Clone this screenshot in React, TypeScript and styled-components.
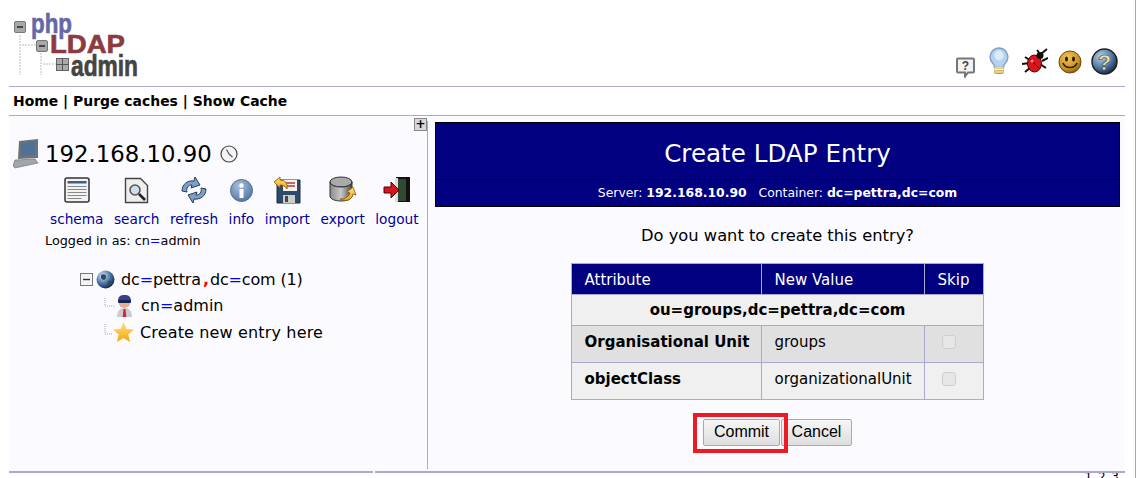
import React from "react";
import styled, { createGlobalStyle } from "styled-components";

const Global = createGlobalStyle`
  html, body { margin: 0; padding: 0; background: #fff; overflow: hidden; }
  body { font-family: "DejaVu Sans", Verdana, sans-serif; color: #000; }
`;
const Page = styled.div`
  width: 1136px; height: 478px; border-right: 1px solid #a9a9a9; padding: 0 10px 0 9px; box-sizing: border-box; overflow: hidden;
`;
const Head = styled.header`
  height: 86px; display: flex; justify-content: space-between; align-items: flex-start;
  border-bottom: 1px solid #aaaacc;
`;
const Logo = styled.svg` width: 132px; height: 64px; margin: 14px 0 0 4px; flex: none; overflow: visible; `;
const HeadIcons = styled.div` display: flex; align-items: flex-start; margin: 47px 7px 0 0; `;
const HeadIcon = styled.span<{ $right?: number; $top?: number }>`
  display: block; margin: ${p => p.$top ?? 0}px ${p => p.$right ?? 0}px 0 0;
`;
const Menu = styled.nav`
  height: 28px; border-bottom: 1px solid #aaaacc; display: flex; align-items: center; padding-left: 4px;
  font-size: 13.95px; font-weight: 700; white-space: pre;
`;
const Main = styled.main`
  background: #fbfbff; border-bottom: 2px solid #aaaacc; padding: 5px 0 2px;
  display: grid; grid-template-columns: 419px 1fr; height: 348px; position: relative;
  &::after { content: ""; position: absolute; left: 364px; bottom: -2px; width: 2px; height: 2px; background: #fff; }
`;
const Side = styled.aside` border-right: 1px solid #aaaacc; position: relative; padding: 16px 0 0 4px; min-width: 0; `;
const Expand = styled.div`
  position: absolute; right: 0; top: -3px; width: 11px; height: 11px; border: 1px solid #888; background: #d8d8d8;
  font: 700 12px/10px "DejaVu Sans", sans-serif; text-align: center; color: #000;
`;
const Server = styled.div` display: flex; align-items: center; font-size: 22.8px; height: 34px; gap: 5px; `;
const ClockSlot = styled.span` margin-left: 3px; display: block; `;
const Actions = styled.div` display: flex; gap: 10.5px; padding: 5px 0 0 37px; `;
const Action = styled.a`
  display: flex; flex-direction: column; align-items: center; gap: 7px; font-size: 13.7px; color: #000099; line-height: 17px;
`;
const IconSlot = styled.span` height: 28px; display: flex; align-items: center; `;
const Logged = styled.div` font-size: 12.8px; padding: 5px 0 0 32px; line-height: 16px; `;
const Tree = styled.div` margin: 17px 0 0 67px; font-size: 16px; `;
const TreeRow = styled.div<{ $indent?: number }>`
  display: flex; align-items: center; height: 26.5px; padding-left: ${p => p.$indent ?? 0}px; white-space: pre;
`;
const TreeLabel = styled.span<{ $left: number; $track?: number }>`
  margin-left: ${p => p.$left}px; letter-spacing: ${p => p.$track ?? 0}px;
`;
const GlobeSlot = styled.span` margin-left: 3px; display: block; `;
const Eq = styled.span` color: #0000ff; `;
const Comma = styled.span` color: #ff0000; margin: 0 1px 0 2px; font-weight: 700; `;
const Content = styled.section` padding: 1px 5px 0 7px; min-width: 0; `;
const Title = styled.div` background: #000080; border: 1px solid #000; color: #fff; text-align: center; `;
const TitleMain = styled.h3`
  margin: 0; height: 56px; line-height: 61px; font-size: 24.6px; font-weight: 400; border-bottom: 1px solid #000;
`;
const TitleSub = styled.div` height: 26px; line-height: 26px; font-size: 12.4px; white-space: pre; `;
const Question = styled.div` text-align: center; font-size: 16.3px; margin-top: 19px; line-height: 20px; `;
const Table = styled.table`
  border-collapse: collapse; margin: 17px auto 0; width: 413px; table-layout: fixed; font-size: 15px;
  td, th { border: 1px solid #aaaacc; padding: 0 0 0 12.500px; font-weight: 400; text-align: left; }
`;
const ColA = styled.col` width: 190px; `;
const ColB = styled.col` width: 163px; `;
const HeadRow = styled.tr` background: #000080; color: #fff; height: 31px; th { padding-top: 2px; } `;
const DnRow = styled.tr`
  background: #f0f0f0; height: 31px; td { text-align: center; font-weight: 700; padding: 0; }
`;
const Row = styled.tr<{ $shade?: boolean; $h: number }>`
  background: ${p => (p.$shade ? "#e0e0e0" : "#f0f0f0")}; height: ${p => p.$h}px;
  td { padding-bottom: 4px; }
`;
const AttrCell = styled.td` && { font-weight: 700; } `;
const SkipCell = styled.td` && { padding-left: 17px; } `;
const Box = styled.span`
  display: block; width: 14px; height: 14px; box-sizing: border-box;
  border: 1px solid #cfcfcf; border-radius: 3px; background: #e6e6e6;
`;
const Buttons = styled.div` display: flex; justify-content: center; margin-top: 19px; gap: 1px; `;
const Btn = styled.button<{ $w: number }>`
  font: 16px "Liberation Sans", Arial, sans-serif; height: 27px; padding: 0 0 2px; color: #000; box-sizing: border-box;
  background: linear-gradient(#f6f6f6, #dedede); border: 1px solid #a9a9a9; border-radius: 2px; width: ${p => p.$w}px;
`;
const Mark = styled.span` position: relative; display: flex; `;
const Red = styled.i` position: absolute; left: -10px; top: -6px; width: 95px; height: 40px; box-sizing: border-box; border: 4px solid #ed1c24; `;
const Version = styled.div` text-align: right; font-size: 12px; padding-right: 5px; line-height: 10px; margin-top: -1px; letter-spacing: 1px; `;
const HiddenDefs = styled.svg` position: absolute; width: 0; height: 0; `;
const S = styled.svg` flex: none; display: block; `;
const Dots = styled.svg` flex: none; display: block; `;

const Defs = () => (
  <HiddenDefs>
    <defs>
      <radialGradient id="gBlue" cx="35%" cy="30%" r="75%"><stop offset="0" stopColor="#b7cfe6" /><stop offset="0.6" stopColor="#4f7aa3" /><stop offset="1" stopColor="#14273f" /></radialGradient>
      <radialGradient id="gSmile" cx="40%" cy="30%" r="75%"><stop offset="0" stopColor="#f2c35a" /><stop offset="0.7" stopColor="#c98f1e" /><stop offset="1" stopColor="#7a5410" /></radialGradient>
      <radialGradient id="gInfo" cx="40%" cy="30%" r="75%"><stop offset="0" stopColor="#a9c0dc" /><stop offset="1" stopColor="#4e74a3" /></radialGradient>
      <radialGradient id="gGlobe" cx="35%" cy="30%" r="75%"><stop offset="0" stopColor="#dbe8f5" /><stop offset="0.55" stopColor="#4a78ad" /><stop offset="1" stopColor="#12233f" /></radialGradient>
      <linearGradient id="gGold" x1="0" y1="0" x2="0" y2="1"><stop offset="0" stopColor="#ffe27a" /><stop offset="1" stopColor="#f5a40f" /></linearGradient>
      <linearGradient id="gDisk" x1="0" y1="0" x2="1" y2="0"><stop offset="0" stopColor="#8a8a8a" /><stop offset="0.5" stopColor="#c8c8c8" /><stop offset="1" stopColor="#4a4a4a" /></linearGradient>
      <linearGradient id="gBulbBase" x1="0" y1="0" x2="0" y2="1"><stop offset="0" stopColor="#efe08e" /><stop offset="1" stopColor="#b89a3c" /></linearGradient>
    </defs>
  </HiddenDefs>
);

const LogoArt = () => (
  <Logo viewBox="0 0 132 64">
    <g fill="#a8a8a8" stroke="#777" strokeWidth="1"><rect x="1.500" y="7.500" width="11" height="11" rx="1.500" /><rect x="23.500" y="26.500" width="11" height="11" rx="1.500" /></g>
    <path d="M4 13h6M26 32h6" stroke="#444" strokeWidth="2" />
    <rect x="43.500" y="44.500" width="12" height="12" fill="#aaa" stroke="#666" /><path d="M49.500 44v13M43 50.500h13" stroke="#555" />
    <path d="M7 21v40M9 31h14M28 39v22M30 50h13" stroke="#ddd" strokeWidth="2" strokeDasharray="2 1" fill="none" />
    <text x="18" y="19" fontFamily="'Liberation Sans',sans-serif" fontWeight="700" fontSize="27" fill="#6468a8" stroke="#6468a8" strokeWidth="0.600" textLength="41" lengthAdjust="spacingAndGlyphs">php</text>
    <text x="37" y="39" fontFamily="'Liberation Sans',sans-serif" fontWeight="700" fontSize="25" fill="#8c3c40" stroke="#8c3c40" strokeWidth="0.600" textLength="75" lengthAdjust="spacingAndGlyphs">LDAP</text>
    <text x="58" y="62" fontFamily="'Liberation Sans',sans-serif" fontWeight="700" fontSize="30" fill="#444" stroke="#444" strokeWidth="0.700" textLength="67" lengthAdjust="spacingAndGlyphs">admin</text>
  </Logo>
);

const IcoHelpBubble = () => (<S width="19" height="21" viewBox="0 0 19 21"><path d="M2 1.500h15a1 1 0 0 1 1 1v12a1 1 0 0 1-1 1h-5l-3 4v-4H2a1 1 0 0 1-1-1v-12a1 1 0 0 1 1-1z" fill="#f2f2f2" stroke="#777" strokeWidth="2" /><text x="9.500" y="13" textAnchor="middle" fontSize="12" fontWeight="700" fill="#444" fontFamily="'Liberation Sans',sans-serif">?</text></S>);
const IcoBulb = () => (<S width="20" height="28" viewBox="0 0 20 28"><path d="M10 1a9 9 0 0 0-6 15.500c1.500 1.500 1.500 3 1.500 4h9c0-1 0-2.500 1.500-4A9 9 0 0 0 10 1z" fill="#b7d2ee" stroke="#7f9fc4" strokeWidth="1.400" /><ellipse cx="10" cy="8.500" rx="4.500" ry="5" fill="#dcebf8" /><rect x="5" y="20" width="10" height="7" rx="2" fill="url(#gBulbBase)" /><path d="M5.500 22.500h9M5.500 25h9" stroke="#fff6c8" strokeWidth="1.200" /></S>);
const IcoBug = () => (<S width="26" height="27" viewBox="0 0 26 27"><path d="M3 9l6 4M0 16l8-1M3 24l6-5M25 1l-6 5M26 10l-6 3M24 20l-6-4M15 2l3 4" stroke="#111" strokeWidth="2" fill="none" /><ellipse cx="12.500" cy="15.500" rx="7" ry="8.500" fill="#d8141c" stroke="#500" /><circle cx="18" cy="7.500" r="3.500" fill="#111" /><path d="M8 11l9 9" stroke="#600" /><circle cx="10" cy="13" r="1.500" fill="#ff8a8a" /></S>);
const IcoSmile = () => (<S width="24" height="24" viewBox="0 0 24 24"><circle cx="12" cy="12" r="11" fill="url(#gSmile)" stroke="#6b4a10" /><ellipse cx="8.500" cy="9" rx="1.500" ry="2.500" fill="#2a1a00" /><ellipse cx="15.500" cy="9" rx="1.500" ry="2.500" fill="#2a1a00" /><path d="M5 13c2 6 12 6 14 0" fill="none" stroke="#2a1a00" strokeWidth="1.600" /></S>);
const IcoHelp = () => (<S width="27" height="27" viewBox="0 0 27 27"><circle cx="13.500" cy="13.500" r="12.500" fill="url(#gBlue)" stroke="#222" strokeWidth="1.500" /><text x="13.500" y="21.500" textAnchor="middle" fontSize="22" fontWeight="700" fill="#f0e2a8" stroke="#3a3a2a" strokeWidth="0.500" fontFamily="'Liberation Sans',sans-serif">?</text></S>);
const IcoComputer = () => (<S width="27" height="30" viewBox="0 0 27 30"><path d="M6 2l19-2v19L5 20z" fill="#6d7278" /><path d="M8 4l14-1.500v13L8 17z" fill="#4f7194" /><path d="M2 21l20-1 3 4-23 5-2-2z" fill="#a3a6a9" stroke="#666" strokeWidth="0.600" /></S>);
const IcoClock = () => (<S width="18" height="18" viewBox="0 0 18 18"><circle cx="9" cy="9" r="8" fill="#f4f4f4" stroke="#444" strokeWidth="1.200" /><path d="M9 9L6.500 4.500M9 9l3.500 3" stroke="#555" strokeWidth="1.200" /></S>);
const IcoSchema = () => (<S width="26" height="26" viewBox="0 0 26 26"><rect x="1" y="1" width="24" height="24" rx="2" fill="#f2f2f2" stroke="#333" strokeWidth="1.500" /><rect x="3.500" y="4" width="19" height="2.500" fill="#3f5f8a" /><path d="M3.500 9.500h19M3.500 12.500h19M3.500 15.500h19M3.500 18.500h19M3.500 21.500h14" stroke="#888" /></S>);
const IcoSearch = () => (<S width="25" height="27" viewBox="0 0 25 27"><path d="M1.500 1.500h15l7 7v17h-22z" fill="#eee" stroke="#444" strokeWidth="1.400" /><circle cx="11" cy="13" r="5" fill="#cfdcea" stroke="#555" strokeWidth="1.600" /><path d="M15 17l6 6" stroke="#222" strokeWidth="2.600" /></S>);
const IcoRefresh = () => (<S width="28" height="28" viewBox="0 0 28 28"><path d="M2 15C2 8 8 4 14 5l1-4 5 8-9 3 1-3c-4 0-6 3-5 7z" fill="#7aa0c8" stroke="#2a3c55" /><path d="M26 13c0 7-6 11-12 10l-1 4-5-8 9-3-1 3c4 0 6-3 5-7z" fill="#7aa0c8" stroke="#2a3c55" /></S>);
const IcoInfo = () => (<S width="23" height="23" viewBox="0 0 23 23"><circle cx="11.500" cy="11.500" r="11" fill="url(#gInfo)" stroke="#5d6f8a" /><rect x="9.500" y="10" width="4" height="9" fill="#fff" /><circle cx="11.500" cy="6.500" r="2.200" fill="#fff" /></S>);
const IcoImport = () => (<S width="28" height="28" viewBox="0 0 28 28"><path d="M4 4h23v23H4z" fill="#2d4a6a" stroke="#1c2e44" /><rect x="10" y="4" width="14" height="11" fill="#f4f0ea" /><path d="M12 7h10M12 10h10" stroke="#b23a3a" strokeWidth="1.500" /><rect x="10" y="19" width="12" height="8" fill="#ccc" /><rect x="12" y="20" width="3" height="6" fill="#444" /><path d="M1 6l6-5v3c5 0 8 3 7 9-2-3-4-4-7-4v3z" fill="url(#gGold)" stroke="#7a5a10" strokeWidth="0.800" /></S>);
const IcoExport = () => (<S width="28" height="28" viewBox="0 0 28 28"><ellipse cx="12" cy="6" rx="11" ry="5" fill="#aaa" stroke="#333" /><path d="M1 6v14c0 3 5 5 11 5s11-2 11-5V6c0 3-5 5-11 5S1 9 1 6z" fill="url(#gDisk)" stroke="#333" /><path d="M11 23c6 3 12 1 13-5l3 1-3-8-6 5 3 1c-1 4-5 6-10 6z" fill="url(#gGold)" stroke="#7a5a10" strokeWidth="0.800" /></S>);
const IcoLogout = () => (<S width="28" height="28" viewBox="0 0 28 28"><rect x="13" y="1" width="14" height="25" fill="#111" /><path d="M15 3l8 0v22l-8 0z" fill="#2f4a30" /><rect x="12" y="2" width="3" height="24" fill="#dcdcdc" /><path d="M1 11h7V6l8 8-8 8v-5H1z" fill="#d8141c" stroke="#500" /></S>);
const IcoMinus = () => (<S width="13" height="13" viewBox="0 0 13 13"><rect x="0.500" y="0.500" width="12" height="12" fill="#f4f4f4" stroke="#777" /><path d="M3 6.500h7" stroke="#333" strokeWidth="1.400" /></S>);
const IcoGlobe = () => (<S width="19" height="19" viewBox="0 0 19 19"><circle cx="9.500" cy="9.500" r="9" fill="url(#gGlobe)" /><path d="M5 5c3-2 6 0 5 3s-4 2-5 0zM12 11c3-1 5 0 3 3s-4 1-3-3z" fill="#39495a" /></S>);
const IcoUser = () => (<S width="21" height="24" viewBox="0 0 21 24"><path d="M3 23c0-6 3-9 7.500-9s7.500 3 7.500 9z" fill="#c9ccd4" /><path d="M9.500 15h2l.8 8H8.700z" fill="#d8262c" /><circle cx="10.500" cy="8" r="6" fill="#e8b090" /><path d="M4 7c0-5 3-6 6.500-6S17 2 17 7z" fill="#34428a" /><rect x="4" y="6" width="13" height="3" rx="1" fill="#1c2550" /></S>);
const IcoStar = () => (<S width="21" height="20" viewBox="0 0 21 20"><path d="M10.500 0l3 7 7.500.6-5.700 4.900 1.800 7.500-6.600-4-6.600 4 1.800-7.500L0 7.600 7.500 7z" fill="url(#gGold)" /></S>);

const actions: [React.ReactNode, string][] = [
  [<IcoSchema />, "schema"], [<IcoSearch />, "search"], [<IcoRefresh />, "refresh"], [<IcoInfo />, "info"],
  [<IcoImport />, "import"], [<IcoExport />, "export"], [<IcoLogout />, "logout"],
];

export default function App() {
  return (
    <Page>
      <Global />
      <Defs />
      <Head>
        <LogoArt />
        <HeadIcons>
          <HeadIcon $top={10} $right={14}><IcoHelpBubble /></HeadIcon>
          <HeadIcon $right={13}><IcoBulb /></HeadIcon>
          <HeadIcon $top={1} $right={10}><IcoBug /></HeadIcon>
          <HeadIcon $top={3} $right={9}><IcoSmile /></HeadIcon>
          <HeadIcon $top={1}><IcoHelp /></HeadIcon>
        </HeadIcons>
      </Head>
      <Menu>Home | Purge caches | Show Cache</Menu>
      <Main>
        <Side>
          <Expand>+</Expand>
          <Server><IcoComputer /><span>192.168.10.90</span><ClockSlot><IcoClock /></ClockSlot></Server>
          <Actions>
            {actions.map(([icon, label]) => (
              <Action key={label}><IconSlot>{icon}</IconSlot>{label}</Action>
            ))}
          </Actions>
          <Logged>Logged in as: cn<Eq>=</Eq>admin</Logged>
          <Tree>
            <TreeRow>
              <IcoMinus /><GlobeSlot><IcoGlobe /></GlobeSlot>
              <TreeLabel $left={6} $track={-0.15}>dc<Eq>=</Eq>pettra<Comma>,</Comma>dc<Eq>=</Eq>com (1)</TreeLabel>
            </TreeRow>
            <TreeRow $indent={24}>
              <Dots width="10" height="16" viewBox="0 0 10 16"><path d="M1 0v8h9" stroke="#aaa" strokeDasharray="1 1" fill="none" /></Dots>
              <IcoUser /><TreeLabel $left={6}>cn<Eq>=</Eq>admin</TreeLabel>
            </TreeRow>
            <TreeRow $indent={24}>
              <Dots width="9" height="16" viewBox="0 0 9 16"><path d="M1 0v10h8" stroke="#aaa" strokeDasharray="1 1" fill="none" /></Dots>
              <IcoStar /><TreeLabel $left={6} $track={0.15}>Create new entry here</TreeLabel>
            </TreeRow>
          </Tree>
        </Side>
        <Content>
          <Title>
            <TitleMain>Create LDAP Entry</TitleMain>
            <TitleSub>Server: <b>192.168.10.90</b>   Container: <b>dc=pettra,dc=com</b></TitleSub>
          </Title>
          <Question>Do you want to create this entry?</Question>
          <Table>
            <colgroup><ColA /><ColB /><col /></colgroup>
            <tbody>
              <HeadRow><th>Attribute</th><th>New Value</th><th>Skip</th></HeadRow>
              <DnRow><td colSpan={3}>ou=groups,dc=pettra,dc=com</td></DnRow>
              <Row $shade $h={37}><AttrCell>Organisational Unit</AttrCell><td>groups</td><SkipCell><Box /></SkipCell></Row>
              <Row $h={37}><AttrCell>objectClass</AttrCell><td>organizationalUnit</td><SkipCell><Box /></SkipCell></Row>
            </tbody>
          </Table>
          <Buttons>
            <Mark><Red /><Btn $w={77}>Commit</Btn></Mark>
            <Btn $w={71}>Cancel</Btn>
          </Buttons>
        </Content>
      </Main>
      <Version>1.2.3</Version>
    </Page>
  );
}
